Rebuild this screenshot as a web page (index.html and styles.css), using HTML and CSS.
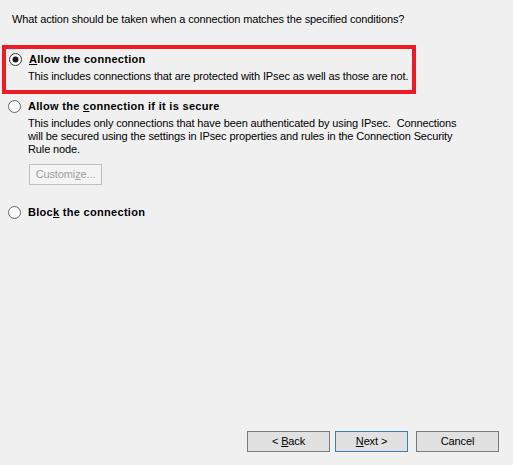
FILE: index.html
```html
<!DOCTYPE html>
<html>
<head>
<meta charset="utf-8">
<link rel="stylesheet" href="styles.css">
</head>
<body>
<div class="page">
  <p class="question">What action should be taken when a connection matches the specified conditions?</p>

  <div class="option option-selected">
    <div class="option-row">
      <svg class="radio" width="13" height="13" viewBox="0 0 13 13"><circle cx="6.5" cy="6.5" r="6" fill="#fff" stroke="#333"/><circle cx="6.5" cy="6.5" r="3" fill="#1a1a1a"/></svg>
      <span class="label"><u>A</u>llow the connection</span>
    </div>
    <p class="desc">This includes connections that are protected with IPsec as well as those are not.</p>
  </div>

  <div class="option option-secure">
    <div class="option-row">
      <svg class="radio" width="13" height="13" viewBox="0 0 13 13"><circle cx="6.5" cy="6.5" r="6" fill="#fff" stroke="#666"/></svg>
      <span class="label">Allow the <u>c</u>onnection if it is secure</span>
    </div>
    <p class="desc">This includes only connections that have been authenticated by using IPsec.&nbsp; Connections<br>will be secured using the settings in IPsec properties and rules in the Connection Security<br>Rule node.</p>
    <button class="btn btn-disabled" disabled>Customi<u>z</u>e...</button>
  </div>

  <div class="option option-block">
    <div class="option-row">
      <svg class="radio" width="13" height="13" viewBox="0 0 13 13"><circle cx="6.5" cy="6.5" r="6" fill="#fff" stroke="#666"/></svg>
      <span class="label">Bloc<u>k</u> the connection</span>
    </div>
  </div>

  <div class="footer">
    <button class="btn btn-back">&lt; <u>B</u>ack</button>
    <button class="btn btn-next"><u>N</u>ext &gt;</button>
    <button class="btn btn-cancel">Cancel</button>
  </div>
</div>
</body>
</html>
```
FILE: styles.css
```css
html, body {
  margin: 0;
  padding: 0;
  background: #f0f0f0;
}

body {
  font-family: "Liberation Sans", Arial, sans-serif;
  font-size: 11px;
  line-height: 13px;
  letter-spacing: -0.12px;
  color: #000;
}

.page {
  height: 465px;
  display: flex;
  flex-direction: column;
  box-sizing: border-box;
}

p {
  margin: 0;
}

u {
  text-decoration: underline;
  text-underline-offset: 1px;
}

.question {
  padding: 13px 0 0 12px;
  white-space: nowrap;
}

.option-row {
  display: flex;
  align-items: center;
  gap: 7px;
  padding-left: 8px;
}

.radio {
  display: block;
  flex: none;
}

.label {
  font-weight: bold;
  letter-spacing: 0.3px;
}

.desc {
  padding-left: 28px;
  margin-top: 4px;
  white-space: nowrap;
}

.option-selected {
  margin: 19px 0 0 2px;
  width: 414px;
  box-sizing: border-box;
  border: 4px solid #ed1c24;
  padding: 4px 0 7px 0;
}

.option-selected .option-row {
  padding-left: 3px;
}

.option-selected .desc {
  padding-left: 22px;
}

.option-secure {
  margin-top: 6px;
}

.option-block {
  margin-top: 21px;
}

.btn {
  font-family: "Liberation Sans", Arial, sans-serif;
  font-size: 11px;
  line-height: 13px;
  letter-spacing: -0.12px;
  height: 21px;
  padding: 0;
  margin: 0;
  background: #e1e1e1;
  border: 1px solid #7a7a7a;
  border-radius: 0;
  color: #000;
  box-sizing: border-box;
}

.btn-disabled {
  display: block;
  margin: 8px 0 0 29px;
  width: 73px;
  background: #f4f4f4;
  border-color: #bfbfbf;
  color: #a0a0a0;
}

.footer {
  margin-top: auto;
  display: flex;
  justify-content: flex-end;
  padding: 0 14px 13px 0;
}

.btn-back {
  width: 83px;
}

.btn-next {
  width: 73px;
  margin-left: 5px;
  border-color: #3f7db6;
}

.btn-cancel {
  width: 83px;
  margin-left: 8px;
}
```
